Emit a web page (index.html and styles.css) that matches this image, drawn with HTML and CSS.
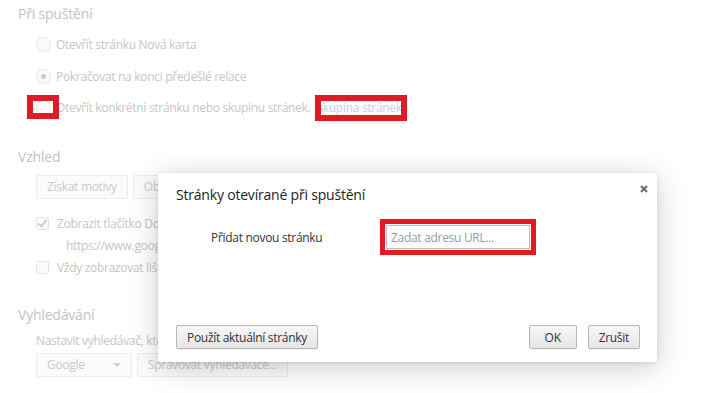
FILE: index.html
```html
<!DOCTYPE html>
<html lang="cs">
<head>
  <meta charset="UTF-8" />
  <meta name="viewport" content="width=device-width, initial-scale=1.0"/>
  <title>Nastavení</title>
  <link rel="stylesheet" href="styles.css">
</head>
<body>

  <div class="settings">
    <section class="section">
      <h3>Při spuštění</h3>
      <div class="radio-row"><span class="radio"></span> Otevřít stránku Nová karta</div>
      <div class="radio-row"><span class="radio checked"></span> Pokračovat na konci předešlé relace</div>
      <div class="radio-row"><span class="radio"></span> Otevřít konkrétní stránku nebo skupinu stránek. <a class="link">skupina stránek</a></div>
    </section>

    <section class="section vzhled">
      <h3>Vzhled</h3>
      <div class="btn-row">
        <span class="btn">Získat motivy</span>
        <span class="btn">Obnovit výchozí motiv</span>
      </div>
      <div class="check-row"><span class="check on"></span> Zobrazit tlačítko Domovská stránka</div>
      <div class="sub-row">https://www.google.cz/</div>
      <div class="check-row"><span class="check"></span> Vždy zobrazovat lištu záložek</div>
    </section>

    <section class="section hledani">
      <h3>Vyhledávání</h3>
      <div class="text-row">Nastavit vyhledávač, který se použije při vyhledávání z omniboxu.</div>
      <div class="btn-row">
        <span class="select">Google <span class="arrow"></span></span>
        <span class="btn">Spravovat vyhledávače...</span>
      </div>
    </section>
  </div>

  <!-- anotace -->
  <div class="mark mark-radio"></div>
  <div class="mark mark-link"></div>

  <div class="dialog">
    <div class="dialog-head">
      <span class="dialog-title">Stránky otevírané při spuštění</span>
      <span class="close">
        <svg width="8" height="8" viewBox="0 0 8 8"><path d="M1 1L7 7M7 1L1 7" stroke="#6b6b6b" stroke-width="2"/></svg>
      </span>
    </div>
    <div class="dialog-body">
      <span class="field-label">Přidat novou stránku</span>
      <span class="field-wrap"><input type="text" class="url" placeholder="Zadat adresu URL..."></span>
    </div>
    <div class="dialog-foot">
      <button class="dbtn">Použít aktuální stránky</button>
      <div class="foot-right">
        <button class="dbtn ok">OK</button>
        <button class="dbtn">Zrušit</button>
      </div>
    </div>
  </div>

</body>
</html>
```

FILE: styles.css
```css
body {
  margin: 0;
  font-family: "Open Sans", "Noto Sans", sans-serif;
  font-size: 12px;
  letter-spacing: -0.3px;
  color: #c6c6c6;
  background: #fff;
  overflow: hidden;
}
.settings {
  padding: 4px 0 0 18px;
}
h3 {
  font-weight: normal;
  font-size: 14px;
  letter-spacing: -0.2px;
  margin: 0;
  height: 20px;
  line-height: 20px;
  color: #c3c3c3;
}
.radio-row {
  display: flex;
  align-items: center;
  height: 31.5px;
  padding-left: 18px;
  gap: 5px;
}
.section > h3 + .radio-row {
  margin-top: 5px;
}
.radio {
  width: 13px;
  height: 13px;
  border: 1px solid #e6e6e6;
  border-radius: 50%;
  background: #fafafa;
  position: relative;
}
.radio.checked::after {
  content: "";
  position: absolute;
  left: 4px;
  top: 4px;
  width: 5px;
  height: 5px;
  border-radius: 50%;
  background: #c9c9c9;
}
.link {
  color: #c6cde6;
  margin-left: 2px;
}
.vzhled {
  margin-top: 23px;
}
.btn-row {
  display: flex;
  gap: 5px;
  padding-left: 18px;
  margin-top: 8px;
}
.btn, .select {
  height: 22px;
  line-height: 22px;
  border: 1px solid #ececec;
  border-radius: 2px;
  background: #fbfbfb;
  padding: 0 10px;
  color: #cacaca;
}
.select {
  width: 74px;
  display: flex;
  justify-content: space-between;
  align-items: center;
}
.arrow {
  border-left: 4px solid transparent;
  border-right: 4px solid transparent;
  border-top: 4px solid #d2d2d2;
}
.check-row {
  display: flex;
  align-items: center;
  gap: 8px;
  height: 22px;
  padding-left: 18px;
}
.vzhled .btn-row + .check-row {
  margin-top: 14px;
}
.check {
  width: 11px;
  height: 11px;
  border: 1px solid #e4e4e4;
  border-radius: 2px;
  background: #fafafa;
  position: relative;
}
.check.on::after {
  content: "";
  position: absolute;
  left: 3px;
  top: 0;
  width: 3px;
  height: 7px;
  border: solid #cfcfcf;
  border-width: 0 2px 2px 0;
  transform: rotate(40deg);
}
.sub-row {
  height: 22px;
  line-height: 22px;
  padding-left: 48px;
}
.hledani {
  margin-top: 26px;
}
.text-row {
  padding-left: 18px;
  height: 22px;
  line-height: 22px;
  margin-top: 5px;
  white-space: nowrap;
}
.hledani .btn-row {
  margin-top: 1px;
}

/* cervene ramecky */
.mark {
  position: absolute;
  border: 6px solid #e11b25;
  box-sizing: border-box;
}
.mark-radio {
  left: 27px;
  top: 95px;
  width: 32px;
  height: 24px;
}
.mark-link {
  left: 315px;
  top: 95px;
  width: 92px;
  height: 26px;
}

/* dialog */
.dialog {
  position: absolute;
  left: 158px;
  top: 173px;
  width: 499px;
  height: 189px;
  box-sizing: border-box;
  background: #fff;
  border-radius: 3px;
  box-shadow: 0 5px 30px rgba(0, 0, 0, 0.2), 0 1px 4px rgba(0, 0, 0, 0.1);
  padding: 0 17px 13px 18px;
  display: flex;
  flex-direction: column;
  color: #333;
}
.dialog-head {
  display: flex;
  justify-content: space-between;
  align-items: flex-start;
  height: 40px;
}
.dialog-title {
  font-size: 14px;
  letter-spacing: -0.2px;
  margin-top: 12px;
  color: #222;
}
.close {
  margin-top: 7px;
  margin-right: -8px;
}
.dialog-body {
  display: flex;
  align-items: center;
  padding-left: 35px;
  margin-top: 6px;
}
.field-label {
  width: 169px;
  color: #333;
}
.field-wrap {
  border: 5px solid #e11b25;
  padding: 1px;
}
.url {
  display: block;
  width: 144px;
  height: 24px;
  box-sizing: border-box;
  border: 1px solid #bfbfbf;
  padding: 0 4px;
  font-family: inherit;
  font-size: 12px;
  letter-spacing: -0.3px;
  outline: none;
}
.url::placeholder {
  color: #9a9a9a;
}
.dialog-foot {
  margin-top: auto;
  display: flex;
  justify-content: space-between;
}
.foot-right {
  display: flex;
  gap: 11px;
}
.dbtn {
  height: 24px;
  font-family: inherit;
  font-size: 12px;
  letter-spacing: -0.3px;
  color: #333;
  border: 1px solid #b5b5b5;
  border-radius: 2px;
  background: linear-gradient(#f7f7f7, #e6e6e6);
  padding: 0 10px;
  box-shadow: 0 1px 0 rgba(0, 0, 0, 0.05);
}
.dbtn.ok {
  width: 48px;
}
```
